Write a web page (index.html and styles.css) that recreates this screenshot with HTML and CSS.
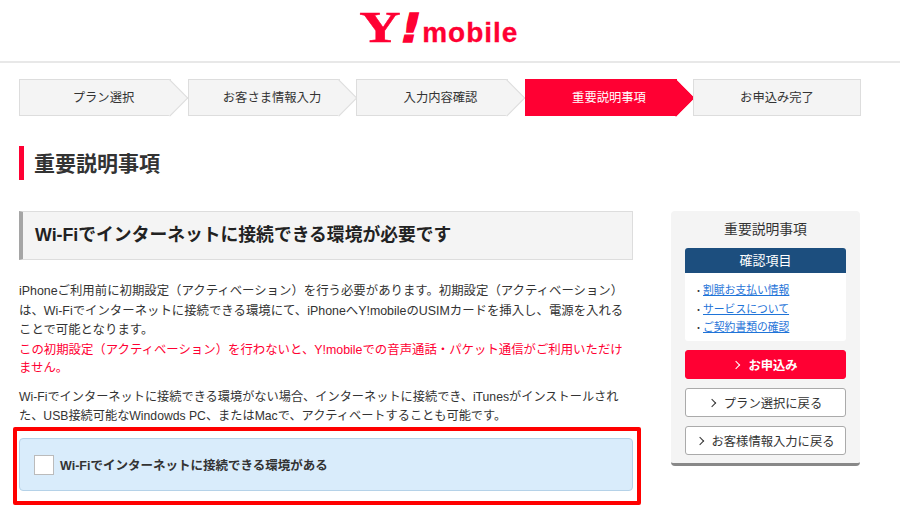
FILE: index.html
```html
<!DOCTYPE html>
<html lang="ja">
<head>
  <meta charset="UTF-8" />
  <title>重要説明事項 | Y!mobile</title>
  <link rel="stylesheet" href="styles.css">
</head>
<body>
  <!-- Header -->
  <header class="site-header">
    <div class="logo"><span class="logo-y">Y</span><span class="logo-bang">!</span><span class="logo-word">mobile</span></div>
  </header>

  <!-- Steps -->
  <ol class="steps">
    <li class="step">プラン選択</li>
    <li class="step">お客さま情報入力</li>
    <li class="step">入力内容確認</li>
    <li class="step active">重要説明事項</li>
    <li class="step last">お申込み完了</li>
  </ol>

  <h1 class="page-title">重要説明事項</h1>

  <div class="main-container">
    <div class="content">
      <h2 class="section-title">Wi-Fiでインターネットに接続できる環境が必要です</h2>
      <p class="lead">iPhoneご利用前に初期設定（アクティベーション）を行う必要があります。初期設定（アクティベーション）は、Wi-Fiでインターネットに接続できる環境にて、iPhoneへY!mobileのUSIMカードを挿入し、電源を入れることで可能となります。</p>
      <p class="warn">この初期設定（アクティベーション）を行わないと、Y!mobileでの音声通話・パケット通信がご利用いただけません。</p>
      <p class="lead second">Wi-Fiでインターネットに接続できる環境がない場合、インターネットに接続でき、iTunesがインストールされた、USB接続可能なWindowds PC、またはMacで、アクティベートすることも可能です。</p>
      <div class="highlight">
        <label class="check-box">
          <span class="check"></span>
          <span>Wi-Fiでインターネットに接続できる環境がある</span>
        </label>
      </div>
    </div>

    <!-- Sidebar -->
    <aside class="sidebar">
      <div class="sidebar-title">重要説明事項</div>
      <div class="confirm">
        <div class="confirm-header">確認項目</div>
        <ul>
          <li><a href="#">割賦お支払い情報</a></li>
          <li><a href="#">サービスについて</a></li>
          <li><a href="#">ご契約書類の確認</a></li>
        </ul>
      </div>
      <a class="btn primary" href="#">お申込み</a>
      <a class="btn" href="#">プラン選択に戻る</a>
      <a class="btn" href="#">お客様情報入力に戻る</a>
    </aside>
  </div>
</body>
</html>
```

FILE: styles.css
```css
body {
  margin: 0;
  font-family: "Liberation Sans", "Noto Sans CJK JP", sans-serif;
  color: #333;
  background-color: #fff;
}

.site-header {
  height: 61px;
  border-bottom: 2px solid #e8e8e8;
  display: flex;
  justify-content: center;
  align-items: flex-start;
}
.logo {
  display: flex;
  align-items: baseline;
  height: 44px;
  margin-top: 6px;
  margin-right: 17.5px;
  color: #ff0033;
  line-height: 44px;
  white-space: nowrap;
}
.logo-y {
  font-family: "Liberation Serif", serif;
  font-weight: 700;
  font-size: 44px;
  -webkit-text-stroke: 0.5px #ff0033;
  transform: scaleX(1.3);
}
.logo-bang {
  font-family: "DejaVu Sans", sans-serif;
  font-weight: 700;
  font-style: italic;
  font-size: 39px;
  -webkit-text-stroke: 1.3px #ff0033;
  margin-left: 6.5px;
  transform: scaleX(1.2);
}
.logo-word {
  font-family: "Liberation Sans", sans-serif;
  font-weight: 700;
  font-size: 28px;
  letter-spacing: 1px;
  -webkit-text-stroke: 0.3px #ff0033;
  margin-left: 2px;
}

.steps {
  list-style: none;
  display: flex;
  margin: 16px 0 0 19px;
  padding: 0;
  height: 37px;
}
.step {
  position: relative;
  box-sizing: border-box;
  width: 152px;
  margin-right: 16.5px;
  padding-left: 16px;
  background-color: #f4f4f4;
  border: 1px solid #ddd;
  border-right: none;
  font-size: 12.3px;
  line-height: 36px;
  text-align: center;
  color: #333;
  white-space: nowrap;
}
/* arrow head */
.step::after {
  content: "";
  position: absolute;
  top: 4.5px;
  left: 137px;
  width: 26px;
  height: 26px;
  box-sizing: border-box;
  background-color: #f4f4f4;
  border-top: 1px solid #ddd;
  border-right: 1px solid #ddd;
  transform: rotate(45deg);
}
.step.active {
  color: #fff;
  background-color: #ff0033;
  border-color: #ff0033;
}
.step.active::after {
  background-color: #ff0033;
  border-color: #ff0033;
}
.step.last {
  width: 168px;
  margin-right: 0;
  padding-left: 0;
  border-right: 1px solid #ddd;
}
.step.last::after {
  display: none;
}

.page-title {
  margin: 30px 0 0 19px;
  padding-left: 10px;
  border-left: 5px solid #ff0033;
  height: 34px;
  font-size: 21px;
  line-height: 35px;
  font-weight: 700;
  color: #333;
}

.main-container {
  display: flex;
  align-items: flex-start;
  margin: 31px 0 0 19px;
}
.content {
  width: 614px;
}
.section-title {
  box-sizing: border-box;
  height: 49px;
  margin: 0;
  padding-left: 12px;
  background-color: #f4f4f4;
  border: 1px solid #ddd;
  border-left: 4px solid #a5a5a5;
  font-size: 17.8px;
  line-height: 47px;
  font-weight: 700;
  color: #222;
}
.lead {
  margin: 22px 0 0;
  font-size: 12.4px;
  line-height: 19.5px;
  color: #333;
}
.warn {
  margin: 0;
  font-size: 12.4px;
  line-height: 18px;
  color: #ff0033;
}
.lead.second {
  margin-top: 11.5px;
  font-size: 12.2px;
  line-height: 19px;
}

.highlight {
  margin: 1px -8px 0 -6px;
  padding: 7px 4px 10px 2px;
  border: 4px solid #ff0000;
  border-radius: 2px;
}
.check-box {
  display: flex;
  align-items: center;
  box-sizing: border-box;
  height: 53px;
  padding-left: 14px;
  background-color: #d9ecfb;
  border: 1px solid #b5d2e8;
  border-radius: 4px;
  font-size: 12.5px;
  font-weight: 700;
  color: #333;
}
.check {
  box-sizing: border-box;
  width: 20px;
  height: 20px;
  margin-right: 6px;
  background-color: #fff;
  border: 1px solid #bbb;
}

.sidebar {
  box-sizing: border-box;
  width: 189px;
  height: 255px;
  margin-left: 38px;
  padding: 0 14px;
  background-color: #f4f4f4;
  border-bottom: 3px solid #888;
  border-radius: 4px;
}
.sidebar-title {
  margin-top: 9px;
  height: 28px;
  font-size: 13.8px;
  line-height: 20px;
  text-align: center;
  color: #333;
}
.confirm {
  background-color: #fff;
  border-radius: 3px;
  height: 93px;
  overflow: hidden;
}
.confirm-header {
  height: 25px;
  background-color: #1c4e7e;
  color: #fff;
  font-size: 13px;
  line-height: 25px;
  text-align: center;
}
.confirm ul {
  list-style: none;
  margin: 0;
  padding: 8px 0 0 10px;
}
.confirm li {
  height: 18.5px;
  font-size: 10.8px;
  line-height: 18.5px;
  color: #333;
}
.confirm li::before {
  content: "・";
  display: inline-block;
  width: 9px;
  margin-left: -1px;
  font-size: 9px;
}
.confirm a {
  color: #1f74d8;
}

.btn {
  display: flex;
  justify-content: center;
  align-items: center;
  box-sizing: border-box;
  height: 29px;
  margin-top: 9px;
  background-color: #fff;
  border: 1px solid #aaa;
  border-radius: 3px;
  font-size: 12.3px;
  color: #333;
  text-decoration: none;
}
.btn::before {
  content: "";
  width: 5px;
  height: 5px;
  margin-right: 9px;
  border-top: 1.5px solid currentColor;
  border-right: 1.5px solid currentColor;
  transform: rotate(45deg);
}
.btn.primary {
  background-color: #ff0033;
  border-color: #ff0033;
  color: #fff;
  font-weight: 700;
}
```
